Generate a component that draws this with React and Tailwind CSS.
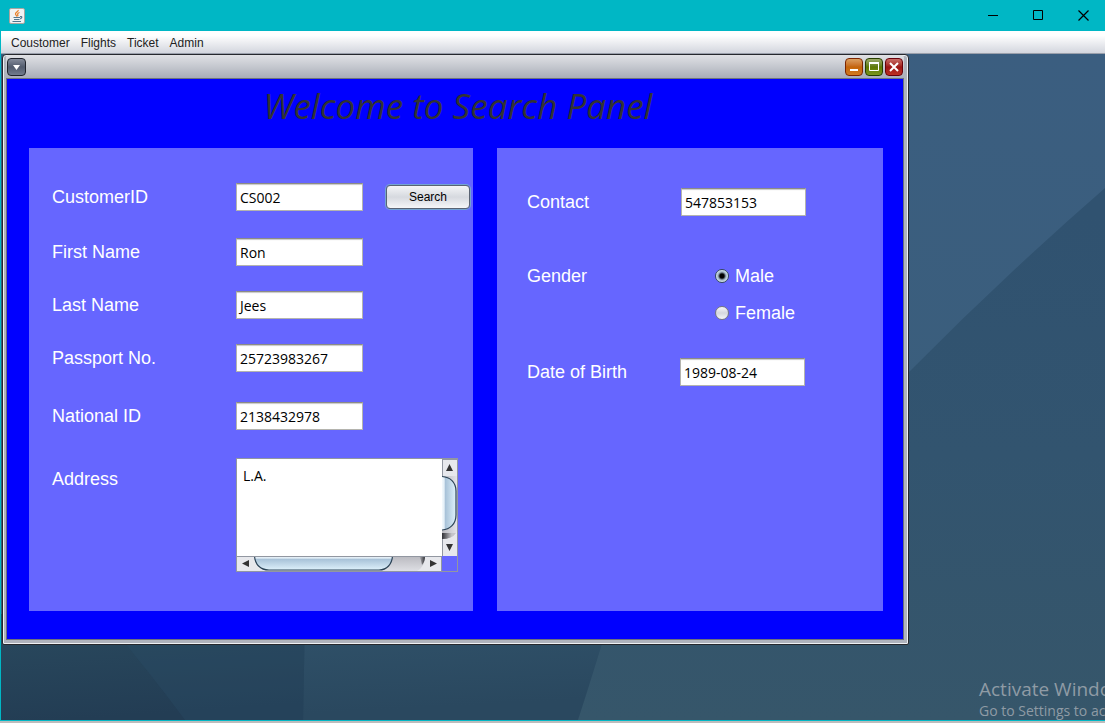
import React from "react";

const fieldClass =
  "h-7 border border-[#b4b4ae] border-t-[#8c8c86] bg-white indent-[3px] font-['Open_Sans','Noto_Sans',sans-serif] text-[14px] leading-5 text-black shadow-[inset_0_2px_1px_-1px_#c8c8c8] outline-none";
const labelClass = "w-[184px] shrink-0 text-[18px] leading-5 text-white";

function JavaIcon() {
  return (
    <svg className="h-4 w-4" viewBox="0 0 16 16" aria-hidden="true">
      <rect x="0.5" y="0.5" width="15" height="15" rx="1.5" fill="#f1f2f3" stroke="#a9a5a0" />
      <path d="M9.2 2c.5 1.500-2.900 2.500-2.700 4 .1.900 1.100 1.500 1.300 2.500M10.500 4.500c-1.300.500-2.200 1.200-1.800 2 .4.700.4 1.200-.2 1.800" fill="none" stroke="#e8812a" strokeWidth="1.300" />
      <path d="M4.500 9.500h6.500M5 11.500h5.500M3.500 13.500h8.500M11 8.600c2.300-.4 2.600 1.200.2 2.300" fill="none" stroke="#51788f" strokeWidth="1.200" />
    </svg>
  );
}

function Wallpaper() {
  return (
    <svg className="absolute inset-0 h-full w-full" viewBox="0 0 1104 666" preserveAspectRatio="none" aria-hidden="true">
      <defs>
        <linearGradient id="sky" x1="1" y1="0" x2="0.800" y2="1">
          <stop offset="0" stopColor="#3b5e80" />
          <stop offset="1" stopColor="#3a5e79" />
        </linearGradient>
        <linearGradient id="sea" x1="0" y1="0" x2="0" y2="1">
          <stop offset="0.050" stopColor="#305270" />
          <stop offset="0.500" stopColor="#32546f" />
          <stop offset="1" stopColor="#36566a" />
        </linearGradient>
        <linearGradient id="middle" x1="0" y1="0" x2="0.300" y2="1">
          <stop offset="0.100" stopColor="#31536b" />
          <stop offset="1" stopColor="#2a485f" />
        </linearGradient>
        <linearGradient id="deep" x1="0" y1="0" x2="0.200" y2="1">
          <stop offset="0" stopColor="#2a4a5f" />
          <stop offset="1" stopColor="#233d54" />
        </linearGradient>
      </defs>
      <rect width="1104" height="666" fill="url(#sky)" />
      <path d="M1104 134Q1003 222 907 319L560 580V666H1104Z" fill="url(#sea)" />
      <path d="M0 560H610Q592 620 577 666H0Z" fill="url(#middle)" />
      <path d="M0 560H304L302 666H0Z" fill="url(#deep)" />
      <path d="M100 560H304L302 666H184Q150 620 100 560Z" fill="#2a4c68" opacity="0.350" />
    </svg>
  );
}

function TitleBar() {
  return (
    <header className="flex h-[31px] items-center bg-[#00b7c5] pl-2">
      <JavaIcon />
      <div className="ml-auto flex">
        <button aria-label="Minimize" className="flex h-[30px] w-[44px] items-center justify-center">
          <svg className="h-[11px] w-[11px]" viewBox="0 0 11 11"><path d="M0 5.500h10" stroke="#000" /></svg>
        </button>
        <button aria-label="Maximize" className="flex h-[30px] w-[46px] items-center justify-center">
          <svg className="h-[11px] w-[11px]" viewBox="0 0 11 11"><path d="M.5.500h9v9h-9Z" fill="none" stroke="#000" /></svg>
        </button>
        <button aria-label="Close" className="flex h-[30px] w-[44px] items-center justify-center">
          <svg className="h-[11px] w-[11px]" viewBox="0 0 11 11"><path d="M.5.500l10 10M10.500.500l-10 10" stroke="#000" strokeWidth="1.200" /></svg>
        </button>
      </div>
    </header>
  );
}

function FrameButtons() {
  return (
    <div className="ml-auto flex gap-[2px]">
      <button aria-label="Minimize panel" className="h-[18px] w-[18px] rounded-[4px] border border-[#7d2500] bg-linear-to-b from-[#dba060] via-[#c46508] to-[#d17920]">
        <svg viewBox="0 0 16 16"><path d="M4 11h8" stroke="#fff" strokeWidth="2" /></svg>
      </button>
      <button aria-label="Maximize panel" className="h-[18px] w-[18px] rounded-[4px] border border-[#263d00] bg-linear-to-b from-[#9bab68] via-[#5d7900] to-[#7a951c]">
        <svg viewBox="0 0 16 16"><path d="M3.500 4v7.500h9V4" fill="none" stroke="#fff" /><path d="M3 4h10" stroke="#fff" strokeWidth="2" /></svg>
      </button>
      <button aria-label="Close panel" className="h-[18px] w-[18px] rounded-[4px] border border-[#67000a] bg-linear-to-b from-[#c96b66] via-[#9d1414] to-[#bd2f22]">
        <svg viewBox="0 0 16 16"><path d="M4 4l8 8M12 4l-8 8" stroke="#fff" strokeWidth="2" /></svg>
      </button>
    </div>
  );
}

function Field({ id, label, value, gap, children }) {
  return (
    <div className={`flex items-center ${gap}`}>
      <label htmlFor={id} className={labelClass}>{label}</label>
      <input id={id} defaultValue={value} className={`w-[127px] ${fieldClass}`} />
      {children}
    </div>
  );
}

function AddressBox() {
  return (
    <div className="grid h-[114px] w-[222px] grid-cols-[1fr_15px] grid-rows-[1fr_15px] border border-[#9297a1]">
      <textarea
        id="address"
        defaultValue="L.A."
        className="resize-none overflow-hidden bg-white px-[6px] pt-[7px] font-['Open_Sans','Noto_Sans',sans-serif] text-[14px] leading-5 text-black outline-none"
      />
      <svg className="h-[97px] w-[15px]" viewBox="0 0 15 97" aria-hidden="true">
        <defs>
          <linearGradient id="vthumb">
            <stop offset="0" stopColor="#f4fafd" /><stop offset="0.150" stopColor="#e4eff7" />
            <stop offset="0.250" stopColor="#a9c3d9" /><stop offset="1" stopColor="#def1fb" />
          </linearGradient>
          <linearGradient id="vtrack" x1="0" x2="1"><stop offset="0" stopColor="#b9b9bf" /><stop offset="1" stopColor="#e2e3e8" /></linearGradient>
          <linearGradient id="vshade" x1="0" x2="1"><stop offset="0" stopColor="#303035" /><stop offset="0.700" stopColor="#c5c5ca" /></linearGradient>
        </defs>
        <rect width="15" height="97" fill="url(#vtrack)" />
        <path d="M0 0h15v17H0ZM0 80Q11 80 15 72V97H0Z" fill="#e7e8ec" />
        <path d="M0 74h14Q10 80 0 80Z" fill="url(#vshade)" />
        <path d="M0 17.500C8 18 14 23 14 32v24C14 65 8 70.500 0 71Z" fill="url(#vthumb)" />
        <path d="M0 17.500C8 18 14 23 14 32v24C14 65 8 70.500 0 71" fill="none" stroke="#2b4356" strokeWidth="1.200" />
        <path d="M.5 0v17M.5 80v17M0 .5h15" stroke="#9297a1" />
        <path d="M4 12h7L7.500 5ZM4 85h7l-3.500 7Z" fill="#333" />
      </svg>
      <svg className="h-[15px] w-full" viewBox="0 0 205 15" preserveAspectRatio="none" aria-hidden="true">
        <defs>
          <linearGradient id="hthumb" x1="0" y1="0" x2="0" y2="1">
            <stop offset="0" stopColor="#f4fafd" /><stop offset="0.150" stopColor="#dce9f3" />
            <stop offset="0.250" stopColor="#a9c3d9" /><stop offset="1" stopColor="#def1fb" />
          </linearGradient>
          <linearGradient id="htrack" x1="0" y1="0" x2="0" y2="1"><stop offset="0" stopColor="#b9b9bf" /><stop offset="1" stopColor="#dedfe4" /></linearGradient>
          <linearGradient id="hshade" x1="0" x2="1"><stop offset="0" stopColor="#c0c0c5" /><stop offset="1" stopColor="#303035" /></linearGradient>
        </defs>
        <rect width="205" height="15" fill="url(#htrack)" />
        <path d="M0 0h17q0 9 13 15H0ZM188 0h17v15h-25q8-4 8-15" fill="#e7e8ec" />
        <path d="M182 0h6q0 6-3 9-1-6-3-9" fill="url(#hshade)" />
        <path d="M17.500 0C18 8 23 14 32 14H142C150 14 155 8 155.500 0Z" fill="url(#hthumb)" />
        <path d="M17.500 0C18 8 23 14 32 14H142C150 14 155 8 155.500 0" fill="none" stroke="#2b4356" strokeWidth="1.200" />
        <path d="M0 .5h205M204.500 0v15" stroke="#9297a1" />
        <path d="M12 4v7L5 7.500ZM193 4v7l7-3.500Z" fill="#333" />
      </svg>
    </div>
  );
}

function GenderOption({ label, checked }) {
  return (
    <label className="flex h-5 items-center gap-[6px] text-[18px] leading-5 text-white">
      <input
        type="radio"
        name="gender"
        defaultChecked={checked}
        className="h-[14px] w-[14px] appearance-none rounded-full border border-[#77797f] bg-linear-to-b from-[#f8f8fa] via-[#d5d7de] to-[#f5f6f9] checked:border-[#33485b] checked:bg-[radial-gradient(circle,#000_0_2px,#9db1c1_4px,#dcebf5_6px)]"
      />
      {label}
    </label>
  );
}

function SearchFrame() {
  return (
    <section className="relative mr-[196px] ml-px flex flex-col rounded-t-[4px] rounded-b-[2px] border border-[#26282d] bg-[#afb3bd] pr-1 pb-1 pl-[3px] shadow-[inset_0_0_0_1px_#eef0f3]">
      <div className="flex h-[23px] items-center rounded-t-[3px] bg-linear-to-b from-[#e0e1e5] via-[#c5c8cf] to-[#a9adb8] pr-px pl-px">
        <button aria-label="Panel menu" className="h-[18px] w-[19px] rounded-[4px] border border-[#20242d] bg-linear-to-b from-[#858c9b] via-[#525b6d] to-[#717b8d]">
          <svg className="h-4 w-[17px]" viewBox="0 0 17 16"><path d="M5 6h7l-3.500 5Z" fill="#fff" /></svg>
        </button>
        <FrameButtons />
      </div>
      <div className="border border-[#6d727e] bg-[#0000ff] pr-5 pb-7 pl-[22px]">
        <h1 className="pt-1 pl-1 text-center font-['Open_Sans','Noto_Sans',sans-serif] text-[35px] leading-[45px] font-normal text-[#333333] italic">
          Welcome to Search Panel
        </h1>
        <form className="mt-5 grid min-h-[463px] grid-cols-[444fr_386fr] gap-6" onSubmit={(e) => e.preventDefault()}>
          <div className="bg-[#6666ff] pt-[35px] pl-[23px]">
            <Field id="customer" label="CustomerID" value="CS002" gap="">
              <button className="ml-[23px] h-[24px] w-[84px] rounded-[4px] border border-[#596373] bg-linear-to-b from-[#f4f5f7] via-[#d6d9df] to-[#f5f6f8] text-[12px] text-black shadow-[0_0_0_1px_#73a4d1]">
                Search
              </button>
            </Field>
            <Field id="first" label="First Name" value="Ron" gap="mt-[27px]" />
            <Field id="last" label="Last Name" value="Jees" gap="mt-[25px]" />
            <Field id="passport" label="Passport No." value="25723983267" gap="mt-[25px]" />
            <Field id="national" label="National ID" value="2138432978" gap="mt-[30px]" />
            <div className="mt-7 flex items-start">
              <label htmlFor="address" className={`pt-[11px] ${labelClass}`}>Address</label>
              <AddressBox />
            </div>
          </div>
          <div className="bg-[#6666ff] pt-10 pl-[30px]">
            <div className="flex items-center">
              <label htmlFor="contact" className="w-[154px] text-[18px] leading-5 text-white">Contact</label>
              <input id="contact" defaultValue="547853153" className={`w-[125px] ${fieldClass}`} />
            </div>
            <fieldset className="mt-[50px] flex">
              <legend className="float-left w-[188px] text-[18px] leading-5 text-white">Gender</legend>
              <div className="flex flex-col gap-[17px]">
                <GenderOption label="Male" checked />
                <GenderOption label="Female" />
              </div>
            </fieldset>
            <div className="mt-[35px] flex items-center">
              <label htmlFor="birth" className="w-[153px] text-[18px] leading-5 text-white">Date of Birth</label>
              <input id="birth" defaultValue="1989-08-24" className={`w-[125px] ${fieldClass}`} />
            </div>
          </div>
        </form>
      </div>
    </section>
  );
}

export default function App() {
  return (
    <div className="flex min-h-screen flex-col bg-[#bdbdbd] pb-[2px] font-['Liberation_Sans',Arial,sans-serif]">
      <div className="flex flex-1 flex-col border-b border-l border-[#00b7c5]">
        <TitleBar />
        <nav className="flex h-[23px] items-center gap-[11px] border-b border-[#9a9fab] bg-linear-to-b from-white from-20% to-[#d3d6de] pt-[2px] pl-[10px] text-[12px] text-[#222]">
          <button>Coustomer</button>
          <button>Flights</button>
          <button>Ticket</button>
          <button>Admin</button>
        </nav>
        <main className="relative flex-1 overflow-hidden">
          <Wallpaper />
          <SearchFrame />
          <div className="absolute right-[-78px] bottom-[-1px] w-[204px] font-['Open_Sans','Noto_Sans',sans-serif] whitespace-nowrap text-[#8f9ba5]">
            <p className="text-[19px] leading-6">Activate Windows</p>
            <p className="text-[14px] leading-5">Go to Settings to activate Windows.</p>
          </div>
        </main>
      </div>
    </div>
  );
}
